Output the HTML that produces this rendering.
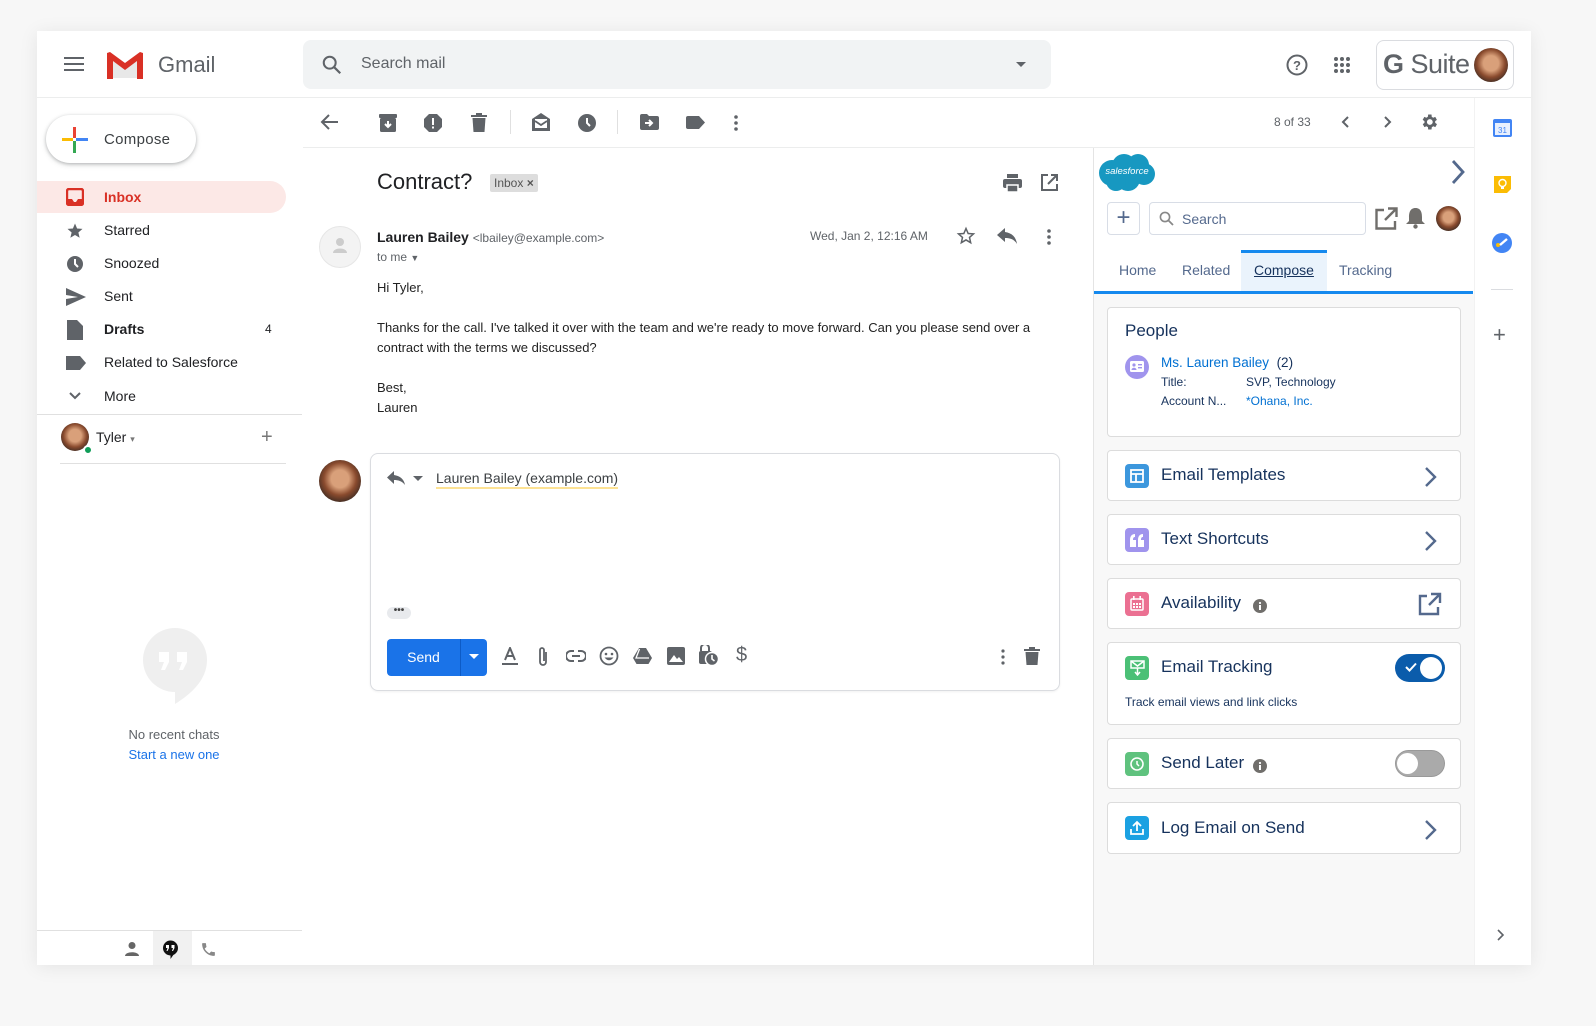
<!DOCTYPE html>
<html><head><meta charset="utf-8"><style>
*{box-sizing:border-box;margin:0;padding:0}
body{width:1596px;height:1026px;background:#f7f7f7;font-family:"Liberation Sans",Arial,sans-serif;position:relative;overflow:hidden;color:#202124}
.a{position:absolute}
#card{left:37px;top:31px;width:1494px;height:934px;background:#fff;box-shadow:0 2px 18px rgba(0,0,0,.08)}
.nav{font-size:14px;color:#202124}
.ic{fill:#5f6368}
.sfcard{position:absolute;left:1107px;width:354px;background:#fff;border:1px solid #dcdcdc;border-radius:4px}
.sft{position:absolute;left:53px;font-size:17px;color:#16325c}
.sfi{position:absolute;left:17px;width:24px;height:24px;border-radius:4px}
.chev{position:absolute;right:22px;top:15px}
</style></head><body>
<div id="card" class="a"></div>

<!-- header -->
<svg class="a" style="left:64px;top:56px" width="22" height="18"><rect y="1" width="20" height="2" fill="#5f6368"/><rect y="7" width="20" height="2" fill="#5f6368"/><rect y="13" width="20" height="2" fill="#5f6368"/></svg>
<svg class="a" style="left:105px;top:51px" width="40" height="29" viewBox="0 0 40 29"><path d="M2 4 L20 17 L38 4 V27 H2Z" fill="#e8e8e8"/><path d="M2 2 V28 H8 V10 L20 19 L32 10 V28 H38 V2 L35 1 L20 12 L5 1Z" fill="#d93025"/></svg>
<div class="a" style="left:158px;top:52px;font-size:22px;color:#5f6368">Gmail</div>
<div class="a" style="left:303px;top:40px;width:748px;height:49px;background:#f1f3f4;border-radius:8px"></div>
<svg class="a" style="left:321px;top:54px" width="22" height="22" viewBox="0 0 24 24"><circle cx="9.5" cy="9.5" r="6.5" fill="none" stroke="#5f6368" stroke-width="2.2"/><path d="M14.5 14.5 L21 21" stroke="#5f6368" stroke-width="2.4"/></svg>
<div class="a" style="left:361px;top:55px;font-size:16px;color:#5f6368">Search mail</div>
<svg class="a" style="left:1015px;top:61px" width="12" height="7"><path d="M1 1 L6 6 L11 1Z" fill="#5f6368"/></svg>
<svg class="a" style="left:1285px;top:53px" width="24" height="24" viewBox="0 0 24 24"><circle cx="12" cy="12" r="9.5" fill="none" stroke="#5f6368" stroke-width="2"/><text x="12" y="17" font-size="13" text-anchor="middle" fill="#5f6368" font-family="Liberation Sans" font-weight="bold">?</text></svg>
<svg class="a" style="left:1333px;top:56px" width="18" height="18"><g fill="#5f6368"><circle cx="3" cy="3" r="2"/><circle cx="9" cy="3" r="2"/><circle cx="15" cy="3" r="2"/><circle cx="3" cy="9" r="2"/><circle cx="9" cy="9" r="2"/><circle cx="15" cy="9" r="2"/><circle cx="3" cy="15" r="2"/><circle cx="9" cy="15" r="2"/><circle cx="15" cy="15" r="2"/></g></svg>
<div class="a" style="left:1376px;top:40px;width:138px;height:50px;border:1px solid #dadce0;border-radius:8px"></div>
<div class="a" style="left:1383px;top:49px;font-size:27px;color:#5f6368;letter-spacing:-.5px"><b>G</b> Suite</div>
<div class="a" style="left:1474px;top:48px;width:34px;height:34px;border-radius:50%;background:radial-gradient(circle at 50% 45%,#d9a07a 0 30%,#8a4b2e 55%,#3b2a22 80%)"></div>
<div class="a" style="left:37px;top:97px;width:1494px;height:1px;background:#eceded"></div>

<!-- left nav -->
<div class="a" style="left:46px;top:115px;width:150px;height:48px;border-radius:24px;background:#fff;box-shadow:0 1px 3px rgba(60,64,67,.3),0 2px 6px rgba(60,64,67,.15)"></div>
<svg class="a" style="left:62px;top:127px" width="26" height="26"><rect x="11" y="0" width="3" height="11" fill="#ea4335"/><rect x="14" y="11" width="12" height="3" fill="#4285f4"/><rect x="11" y="14" width="3" height="12" fill="#34a853"/><rect x="0" y="11" width="11" height="3" fill="#fbbc04"/></svg>
<div class="a" style="left:104px;top:131px;font-size:15px;color:#3c4043;letter-spacing:.3px">Compose</div>
<div class="a" style="left:37px;top:181px;width:249px;height:32px;background:#fce8e6;border-radius:0 16px 16px 0"></div>
<svg class="a" style="left:66px;top:188px" width="18" height="18"><rect x="1" y="1" width="16" height="16" rx="2" fill="none" stroke="#d93025" stroke-width="2.4"/><path d="M1 11 H6 L8 14 H10 L12 11 H17 V17 H1Z" fill="#d93025"/></svg>
<div class="a nav" style="left:104px;top:189px;color:#d93025;font-weight:bold">Inbox</div>
<svg class="a" style="left:66px;top:222px" width="18" height="18" viewBox="0 0 24 24"><path class="ic" d="M12 17.3 L18.2 21 L16.5 14 L22 9.2 L14.8 8.6 L12 2 L9.2 8.6 L2 9.2 L7.5 14 L5.8 21Z"/></svg>
<div class="a nav" style="left:104px;top:222px">Starred</div>
<svg class="a" style="left:66px;top:255px" width="18" height="18"><circle cx="9" cy="9" r="8" fill="#5f6368"/><path d="M9 4 V9 L12 12" stroke="#fff" stroke-width="2" fill="none"/></svg>
<div class="a nav" style="left:104px;top:255px">Snoozed</div>
<svg class="a" style="left:66px;top:288px" width="20" height="18"><path d="M0 0 L20 9 L0 18 V11 L12 9 L0 7Z" fill="#5f6368"/></svg>
<div class="a nav" style="left:104px;top:288px">Sent</div>
<svg class="a" style="left:67px;top:320px" width="16" height="20"><path d="M0 0 H10 L16 6 V20 H0Z" fill="#5f6368"/></svg>
<div class="a nav" style="left:104px;top:321px;font-weight:bold">Drafts</div>
<div class="a" style="left:265px;top:322px;font-size:12px;color:#202124">4</div>
<svg class="a" style="left:66px;top:356px" width="20" height="14"><path d="M0 0 H14 L20 7 L14 14 H0Z" fill="#5f6368"/></svg>
<div class="a nav" style="left:104px;top:354px">Related to Salesforce</div>
<svg class="a" style="left:69px;top:392px" width="12" height="8"><path d="M1 1 L6 6 L11 1" stroke="#5f6368" stroke-width="2" fill="none"/></svg>
<div class="a nav" style="left:104px;top:388px">More</div>
<div class="a" style="left:37px;top:414px;width:265px;height:1px;background:#e0e0e0"></div>
<div class="a" style="left:61px;top:423px;width:28px;height:28px;border-radius:50%;background:radial-gradient(circle at 50% 45%,#d9a07a 0 30%,#8a4b2e 55%,#3b2a22 80%)"></div>
<div class="a" style="left:83px;top:445px;width:10px;height:10px;border-radius:50%;background:#0f9d58;border:2px solid #fff"></div>
<div class="a" style="left:96px;top:429px;font-size:14px;color:#202124">Tyler <span style="font-size:9px;color:#777">▾</span></div>
<div class="a" style="left:261px;top:426px;font-size:20px;color:#777">+</div>
<div class="a" style="left:60px;top:463px;width:226px;height:1px;background:#e0e0e0"></div>
<svg class="a" style="left:143px;top:628px" width="64" height="78" viewBox="0 0 64 78"><path d="M32 0 A32 32 0 0 1 64 32 C64 52 48 66 32 76 V64 A32 32 0 0 1 32 0Z" fill="#efefef"/><path d="M16 24 h10 v10 l-4 8 h-4 l3 -8 h-5Z M34 24 h10 v10 l-4 8 h-4 l3 -8 h-5Z" fill="#fff"/></svg>
<div class="a" style="left:37px;top:727px;width:274px;text-align:center;font-size:13px;color:#5f6368">No recent chats</div>
<div class="a" style="left:37px;top:747px;width:274px;text-align:center;font-size:13px;color:#1a73e8">Start a new one</div>
<div class="a" style="left:37px;top:930px;width:265px;height:1px;background:#e0e0e0"></div>
<div class="a" style="left:153px;top:931px;width:39px;height:34px;background:#f1f1f1"></div>
<svg class="a" style="left:124px;top:941px" width="16" height="16"><circle cx="8" cy="4.5" r="3.5" fill="#666"/><path d="M1 15 C1 10 15 10 15 15Z" fill="#666"/></svg>
<svg class="a" style="left:162px;top:940px" width="17" height="19"><circle cx="8.5" cy="8" r="7.5" fill="#111"/><path d="M8.5 15 V19 L12 14Z" fill="#111"/><path d="M4 5 h3 v3 l-1.5 3 h-1l1-3h-1.5Z M9.5 5 h3 v3 l-1.5 3 h-1l1-3h-1.5Z" fill="#fff"/></svg>
<svg class="a" style="left:200px;top:941px" width="17" height="17" viewBox="0 0 24 24"><path d="M6.6 10.8 c1.4 2.8 3.8 5.1 6.6 6.6 l2.2-2.2 c.3-.3.7-.4 1-.2 1.1.4 2.3.6 3.6.6.6 0 1 .4 1 1V20c0 .6-.4 1-1 1C10.6 21 3 13.4 3 4c0-.6.4-1 1-1h3.5c.6 0 1 .4 1 1 0 1.3.2 2.5.6 3.6.1.3 0 .7-.2 1Z" fill="#888"/></svg>

<!-- toolbar -->
<svg class="a" style="left:320px;top:113px" width="20" height="18" viewBox="0 0 20 18"><path d="M18 9 H3 M9 2 L2 9 L9 16" stroke="#5f6368" stroke-width="2" fill="none"/></svg>
<svg class="a" style="left:379px;top:114px" width="18" height="18"><rect x="0" y="0" width="18" height="4" rx="1" fill="#5f6368"/><rect x="1" y="4" width="16" height="14" rx="1.5" fill="#5f6368"/><path d="M9 7 V13 M6 10 L9 13 L12 10" stroke="#fff" stroke-width="2" fill="none"/></svg>
<svg class="a" style="left:424px;top:114px" width="18" height="18"><path d="M5 0 H13 L18 5 V13 L13 18 H5 L0 13 V5Z" fill="#5f6368"/><rect x="8" y="4" width="2" height="7" fill="#fff"/><rect x="8" y="12.5" width="2" height="2" fill="#fff"/></svg>
<svg class="a" style="left:471px;top:113px" width="16" height="19"><rect x="0" y="2" width="16" height="2" fill="#5f6368"/><rect x="5" y="0" width="6" height="2" fill="#5f6368"/><path d="M1.5 5 H14.5 L13.5 19 H2.5Z" fill="#5f6368"/></svg>
<div class="a" style="left:510px;top:110px;width:1px;height:24px;background:#e0e0e0"></div>
<svg class="a" style="left:531px;top:112px" width="20" height="20"><path d="M1 7 L10 1 L19 7 V19 H1Z" fill="#5f6368"/><rect x="4" y="7" width="12" height="9" fill="#fff"/><path d="M4 9 L10 13 L16 9" stroke="#5f6368" stroke-width="1.8" fill="none"/></svg>
<svg class="a" style="left:578px;top:114px" width="18" height="18"><circle cx="9" cy="9" r="9" fill="#5f6368"/><path d="M9 4 V9 L12 12" stroke="#fff" stroke-width="2" fill="none"/></svg>
<div class="a" style="left:617px;top:110px;width:1px;height:24px;background:#e0e0e0"></div>
<svg class="a" style="left:640px;top:114px" width="19" height="16"><path d="M0 2 Q0 0 2 0 H7 L9 2 H17 Q19 2 19 4 V14 Q19 16 17 16 H2 Q0 16 0 14Z" fill="#5f6368"/><path d="M5 9 H11 M9 6 L12 9 L9 12" stroke="#fff" stroke-width="2" fill="none"/></svg>
<svg class="a" style="left:686px;top:116px" width="19" height="13"><path d="M2 0 H13 L19 6.5 L13 13 H2 Q0 13 0 11 V2 Q0 0 2 0Z" fill="#5f6368"/></svg>
<svg class="a" style="left:733px;top:114px" width="6" height="18"><circle cx="3" cy="3" r="1.8" fill="#5f6368"/><circle cx="3" cy="9" r="1.8" fill="#5f6368"/><circle cx="3" cy="15" r="1.8" fill="#5f6368"/></svg>
<div class="a" style="left:1274px;top:115px;font-size:12px;color:#5f6368">8 of 33</div>
<svg class="a" style="left:1341px;top:116px" width="10" height="12"><path d="M7 1 L2 6 L7 11" stroke="#5f6368" stroke-width="2" fill="none"/></svg>
<svg class="a" style="left:1382px;top:116px" width="10" height="12"><path d="M3 1 L8 6 L3 11" stroke="#5f6368" stroke-width="2" fill="none"/></svg>
<svg class="a" style="left:1419px;top:112px" width="20" height="20" viewBox="0 0 24 24"><path d="M19.4 13a7.5 7.5 0 0 0 0-2l2.1-1.6-2-3.5-2.5 1a7.6 7.6 0 0 0-1.7-1L15 3h-4l-.4 2.9a7.6 7.6 0 0 0-1.7 1l-2.5-1-2 3.5L6.6 11a7.5 7.5 0 0 0 0 2l-2.1 1.6 2 3.5 2.5-1c.5.4 1.1.7 1.7 1L11 21h4l.4-2.9c.6-.3 1.2-.6 1.7-1l2.5 1 2-3.5ZM13 15.5a3.5 3.5 0 1 1 0-7 3.5 3.5 0 0 1 0 7Z" fill="#5f6368"/></svg>
<div class="a" style="left:303px;top:147px;width:1172px;height:1px;background:#eceded"></div>

<!-- email -->
<div class="a" style="left:377px;top:169px;font-size:22px;color:#202124">Contract?</div>
<div class="a" style="left:490px;top:174px;height:18px;padding:0 4px;background:#ddd;border-radius:2px;font-size:12px;line-height:18px;color:#555">Inbox <b>×</b></div>
<svg class="a" style="left:1003px;top:174px" width="19" height="18"><rect x="4" y="0" width="11" height="4" fill="#5f6368"/><rect x="0" y="5" width="19" height="9" rx="2" fill="#5f6368"/><rect x="4" y="11" width="11" height="7" fill="#5f6368" stroke="#fff" stroke-width="1.5"/></svg>
<svg class="a" style="left:1041px;top:174px" width="17" height="17"><path d="M7 1 H1 V16 H16 V10" stroke="#5f6368" stroke-width="2" fill="none"/><path d="M10 1 H16 V7 M16 1 L7 10" stroke="#5f6368" stroke-width="2" fill="none"/></svg>
<div class="a" style="left:319px;top:226px;width:42px;height:42px;border-radius:50%;background:#f3f3f3;border:1px solid #e6e6e6"></div>
<svg class="a" style="left:330px;top:236px" width="20" height="20"><circle cx="10" cy="6" r="4" fill="#ccc"/><path d="M3 17 C3 11 17 11 17 17Z" fill="#ccc"/></svg>
<div class="a" style="left:377px;top:229px;font-size:14px;color:#202124"><b>Lauren Bailey</b> <span style="font-size:12px;color:#5f6368">&lt;lbailey@example.com&gt;</span></div>
<div class="a" style="left:377px;top:250px;font-size:12px;color:#5f6368">to me <span style="font-size:9px">▼</span></div>
<div class="a" style="left:810px;top:229px;font-size:12px;color:#5f6368">Wed, Jan 2, 12:16 AM</div>
<svg class="a" style="left:956px;top:226px" width="20" height="20" viewBox="0 0 24 24"><path d="M12 3 L14.6 9 L21 9.5 L16.2 13.7 L17.6 20 L12 16.7 L6.4 20 L7.8 13.7 L3 9.5 L9.4 9Z" fill="none" stroke="#5f6368" stroke-width="1.8"/></svg>
<svg class="a" style="left:997px;top:228px" width="20" height="16"><path d="M8 0 L0 7 L8 14 V10 C13 10 17 11 20 16 C19 9 15 5 8 4Z" fill="#5f6368"/></svg>
<svg class="a" style="left:1046px;top:228px" width="6" height="18"><circle cx="3" cy="3" r="1.8" fill="#5f6368"/><circle cx="3" cy="9" r="1.8" fill="#5f6368"/><circle cx="3" cy="15" r="1.8" fill="#5f6368"/></svg>
<div class="a" style="left:377px;top:278px;font-size:13px;color:#222;line-height:20px;width:690px">Hi Tyler,<br><br>Thanks for the call. I've talked it over with the team and we're ready to move forward. Can you please send over a contract with the terms we discussed?<br><br>Best,<br>Lauren</div>

<!-- reply -->
<div class="a" style="left:319px;top:460px;width:42px;height:42px;border-radius:50%;background:radial-gradient(circle at 50% 45%,#d9a07a 0 28%,#8a4b2e 52%,#3b2a22 78%)"></div>
<div class="a" style="left:370px;top:453px;width:690px;height:238px;border:1px solid #dadce0;border-radius:8px;box-shadow:0 1px 2px rgba(0,0,0,.06)"></div>
<svg class="a" style="left:387px;top:471px" width="18" height="15"><path d="M7 0 L0 6.5 L7 13 V9 C11 9 15 10 18 14 C17 8 13 5 7 4Z" fill="#5f6368"/></svg>
<svg class="a" style="left:413px;top:476px" width="10" height="6"><path d="M0 0 H10 L5 5Z" fill="#5f6368"/></svg>
<div class="a" style="left:436px;top:469px;font-size:14px;color:#3c4043;border-bottom:2px solid #fde293;line-height:18px">Lauren Bailey (example.com)</div>
<div class="a" style="left:387px;top:607px;width:24px;height:12px;border-radius:6px;background:#e8eaed;font-size:10px;line-height:8px;text-align:center;color:#444;font-weight:bold">•••</div>
<div class="a" style="left:387px;top:639px;width:100px;height:37px;background:#1a73e8;border-radius:4px"></div>
<div class="a" style="left:460px;top:639px;width:1px;height:37px;background:#0d5bc6"></div>
<div class="a" style="left:387px;top:649px;width:73px;text-align:center;color:#fff;font-size:14px">Send</div>
<svg class="a" style="left:469px;top:654px" width="10" height="6"><path d="M0 0 H10 L5 5Z" fill="#fff"/></svg>
<svg class="a" style="left:501px;top:647px" width="18" height="20"><path d="M4 13 L9 1 L14 13 M6 9 H12" stroke="#5f6368" stroke-width="2" fill="none"/><rect x="1" y="16" width="16" height="2" fill="#5f6368"/></svg>
<svg class="a" style="left:537px;top:646px" width="12" height="22"><path d="M9 6 V16 A3 3 0 0 1 3 16 V4 A2 2 0 0 1 7 4 V15" stroke="#5f6368" stroke-width="1.8" fill="none"/></svg>
<svg class="a" style="left:566px;top:650px" width="20" height="12"><path d="M8 1 H5 A5 5 0 0 0 5 11 H8 M12 1 H15 A5 5 0 0 1 15 11 H12 M6 6 H14" stroke="#5f6368" stroke-width="2" fill="none"/></svg>
<svg class="a" style="left:599px;top:646px" width="20" height="20"><circle cx="10" cy="10" r="8.5" fill="none" stroke="#5f6368" stroke-width="1.8"/><circle cx="7" cy="8" r="1.3" fill="#5f6368"/><circle cx="13" cy="8" r="1.3" fill="#5f6368"/><path d="M5.5 11.5 Q10 17 14.5 11.5Z" fill="#5f6368"/></svg>
<svg class="a" style="left:633px;top:648px" width="19" height="16"><path d="M6 0 H13 L19 10 L15.5 16 H3.5 L0 10Z" fill="#5f6368"/><path d="M6.5 1 L3 10 H16" stroke="#fff" stroke-width="1.3" fill="none"/></svg>
<svg class="a" style="left:667px;top:647px" width="18" height="18"><rect width="18" height="18" rx="2" fill="#5f6368"/><path d="M2 15 L7 8 L10 12 L12 10 L16 15Z" fill="#fff"/></svg>
<svg class="a" style="left:698px;top:645px" width="22" height="22"><path d="M3 6 V3 A4 4 0 0 1 11 3 V6" stroke="#5f6368" stroke-width="2" fill="none"/><rect x="1" y="6" width="13" height="13" rx="2" fill="#5f6368"/><circle cx="14" cy="14" r="6.5" fill="#5f6368" stroke="#fff" stroke-width="1.5"/><path d="M14 10 V14 L16.5 16" stroke="#fff" stroke-width="1.6" fill="none"/></svg>
<div class="a" style="left:736px;top:644px;font-size:20px;color:#5f6368">$</div>
<svg class="a" style="left:1000px;top:648px" width="6" height="18"><circle cx="3" cy="3" r="1.6" fill="#5f6368"/><circle cx="3" cy="9" r="1.6" fill="#5f6368"/><circle cx="3" cy="15" r="1.6" fill="#5f6368"/></svg>
<svg class="a" style="left:1024px;top:647px" width="16" height="18"><rect x="0" y="2" width="16" height="2" fill="#5f6368"/><rect x="5" y="0" width="6" height="2" fill="#5f6368"/><path d="M1.5 5 H14.5 L13.5 18 H2.5Z" fill="#5f6368"/></svg>

<!-- salesforce panel -->
<div class="a" style="left:1093px;top:148px;width:1px;height:817px;background:#e4e4e4"></div>
<div class="a" style="left:1094px;top:294px;width:380px;height:671px;background:#f8f8f8"></div>
<svg class="a" style="left:1098px;top:152px" width="58" height="40" viewBox="0 0 58 40"><g fill="#1798c1"><circle cx="14" cy="21" r="13"/><circle cx="26" cy="14" r="12"/><circle cx="40" cy="13" r="11"/><circle cx="46" cy="22" r="11"/><circle cx="30" cy="27" r="12"/><circle cx="18" cy="29" r="10"/></g><text x="29" y="22" font-size="9.5" fill="#fff" text-anchor="middle" font-family="Liberation Sans" font-style="italic">salesforce</text></svg>
<svg class="a" style="left:1450px;top:159px" width="16" height="26"><path d="M3 2 L13 13 L3 24" stroke="#54698d" stroke-width="2.8" fill="none"/></svg>
<div class="a" style="left:1107px;top:202px;width:33px;height:33px;border:1px solid #d8dde6;border-radius:4px;font-size:24px;line-height:29px;text-align:center;color:#54698d">+</div>
<div class="a" style="left:1149px;top:202px;width:217px;height:33px;border:1px solid #d8dde6;border-radius:4px"></div>
<svg class="a" style="left:1159px;top:211px" width="15" height="15"><circle cx="6" cy="6" r="4.6" fill="none" stroke="#888" stroke-width="1.6"/><path d="M9.5 9.5 L14 14" stroke="#888" stroke-width="1.8"/></svg>
<div class="a" style="left:1182px;top:211px;font-size:14px;color:#54698d">Search</div>
<svg class="a" style="left:1375px;top:207px" width="23" height="23"><path d="M9 3 H1.5 V21.5 H20 V14" stroke="#706e6b" stroke-width="2.4" fill="none"/><path d="M13 1.5 H21.5 V10 M21.5 1.5 L10 13" stroke="#706e6b" stroke-width="2.4" fill="none"/></svg>
<svg class="a" style="left:1405px;top:207px" width="21" height="22"><path d="M10.5 1 C5 1 4 6 4 10 V14 L1 17 H20 L17 14 V10 C17 6 16 1 10.5 1Z" fill="#706e6b"/><circle cx="10.5" cy="19.5" r="2.2" fill="#706e6b"/></svg>
<div class="a" style="left:1436px;top:206px;width:25px;height:25px;border-radius:50%;background:radial-gradient(circle at 50% 45%,#d9a07a 0 28%,#8a4b2e 52%,#3b2a22 78%)"></div>
<div class="a" style="left:1119px;top:262px;font-size:14px;color:#54698d">Home</div>
<div class="a" style="left:1182px;top:262px;font-size:14px;color:#54698d">Related</div>
<div class="a" style="left:1241px;top:250px;width:86px;height:43px;background:#eaf3fc;border-top:3px solid #1589ee"></div>
<div class="a" style="left:1254px;top:262px;font-size:14px;color:#16325c;text-decoration:underline">Compose</div>
<div class="a" style="left:1339px;top:262px;font-size:14px;color:#54698d">Tracking</div>
<div class="a" style="left:1094px;top:291px;width:379px;height:3px;background:#1589ee"></div>

<div class="sfcard" style="top:307px;height:130px">
<div class="a" style="left:17px;top:13px;font-size:17px;color:#16325c">People</div>
<div class="a" style="left:17px;top:47px;width:24px;height:24px;border-radius:50%;background:#a094ed"></div>
<svg class="a" style="left:22px;top:53px" width="14" height="11"><rect width="14" height="11" rx="1.5" fill="#fff"/><circle cx="4" cy="4" r="1.6" fill="#a094ed"/><path d="M1.5 9 C1.5 6 6.5 6 6.5 9Z" fill="#a094ed"/><rect x="8" y="3" width="4" height="1.4" fill="#a094ed"/><rect x="8" y="6" width="4" height="1.4" fill="#a094ed"/></svg>
<div class="a" style="left:53px;top:47px;font-size:13.5px;color:#0070d2">Ms. Lauren Bailey &nbsp;<span style="color:#16325c">(2)</span></div>
<div class="a" style="left:53px;top:67px;font-size:12px;color:#16325c">Title:</div>
<div class="a" style="left:138px;top:67px;font-size:12px;color:#16325c">SVP, Technology</div>
<div class="a" style="left:53px;top:86px;font-size:12px;color:#16325c">Account N...</div>
<div class="a" style="left:138px;top:86px;font-size:12px;color:#0070d2">*Ohana, Inc.</div>
</div>

<div class="sfcard" style="top:450px;height:51px">
<div class="sfi" style="top:13px;background:#3c97dd"></div>
<svg class="a" style="left:22px;top:18px" width="14" height="14"><rect x="1" y="1" width="12" height="12" fill="none" stroke="#fff" stroke-width="1.8"/><path d="M1 5 H13 M6 5 V13" stroke="#fff" stroke-width="1.8"/></svg>
<div class="sft" style="top:14px">Email Templates</div>
<svg class="chev" width="14" height="22"><path d="M2 2 L11 11 L2 20" stroke="#54698d" stroke-width="2.4" fill="none"/></svg>
</div>

<div class="sfcard" style="top:514px;height:51px">
<div class="sfi" style="top:13px;background:#a094ed"></div>
<svg class="a" style="left:21px;top:18px" width="16" height="14"><path d="M1 14 V7 C1 3 3 1 6 1 V4 C4.5 4 4 5 4 7 H7 V14Z M9 14 V7 C9 3 11 1 14 1 V4 C12.5 4 12 5 12 7 H15 V14Z" fill="#fff"/></svg>
<div class="sft" style="top:14px">Text Shortcuts</div>
<svg class="chev" width="14" height="22"><path d="M2 2 L11 11 L2 20" stroke="#54698d" stroke-width="2.4" fill="none"/></svg>
</div>

<div class="sfcard" style="top:578px;height:51px">
<div class="sfi" style="top:13px;background:#eb7092"></div>
<svg class="a" style="left:22px;top:17px" width="14" height="15"><rect x="1" y="3" width="12" height="11" rx="1" fill="none" stroke="#fff" stroke-width="1.5"/><rect x="3" y="0" width="1.6" height="4" fill="#fff"/><rect x="9.4" y="0" width="1.6" height="4" fill="#fff"/><g fill="#fff"><rect x="3" y="7" width="2" height="2"/><rect x="6" y="7" width="2" height="2"/><rect x="9" y="7" width="2" height="2"/><rect x="3" y="10" width="2" height="2"/><rect x="6" y="10" width="2" height="2"/><rect x="9" y="10" width="2" height="2"/></g></svg>
<div class="sft" style="top:14px">Availability</div>
<svg class="a" style="left:145px;top:20px" width="14" height="14"><circle cx="7" cy="7" r="7" fill="#706e6b"/><rect x="6" y="6" width="2" height="5" fill="#fff"/><circle cx="7" cy="4" r="1.1" fill="#fff"/></svg>
<svg class="a" style="right:18px;top:13px" width="24" height="24"><path d="M9 4 H2 V22 H20 V15" stroke="#54698d" stroke-width="2.4" fill="none"/><path d="M13 2 H22 V11 M22 2 L11 13" stroke="#54698d" stroke-width="2.4" fill="none"/></svg>
</div>

<div class="sfcard" style="top:642px;height:83px">
<div class="sfi" style="top:13px;background:#4bc076"></div>
<svg class="a" style="left:22px;top:17px" width="15" height="16"><path d="M1 1 H14 V8 H1Z" fill="none" stroke="#fff" stroke-width="1.5"/><path d="M1 1 L7.5 6 L14 1" stroke="#fff" stroke-width="1.5" fill="none"/><path d="M7.5 8 V15 M5 12 L7.5 15 L10 12" stroke="#fff" stroke-width="1.5" fill="none"/></svg>
<div class="sft" style="top:14px">Email Tracking</div>
<div class="a" style="left:287px;top:11px;width:50px;height:28px;border-radius:14px;background:#0b5cab"></div>
<div class="a" style="left:312px;top:14px;width:22px;height:22px;border-radius:50%;background:#fff"></div>
<svg class="a" style="left:297px;top:19px" width="12" height="10"><path d="M1 5 L4.5 8.5 L11 1.5" stroke="#fff" stroke-width="2" fill="none"/></svg>
<div class="a" style="left:17px;top:52px;font-size:12px;color:#16325c">Track email views and link clicks</div>
</div>

<div class="sfcard" style="top:738px;height:51px">
<div class="sfi" style="top:13px;background:#5fc27e"></div>
<svg class="a" style="left:21px;top:17px" width="16" height="16"><circle cx="8" cy="8" r="6" fill="none" stroke="#fff" stroke-width="1.6"/><path d="M8 5 V8 L10 10" stroke="#fff" stroke-width="1.5" fill="none"/></svg>
<div class="sft" style="top:14px">Send Later</div>
<svg class="a" style="left:145px;top:20px" width="14" height="14"><circle cx="7" cy="7" r="7" fill="#706e6b"/><rect x="6" y="6" width="2" height="5" fill="#fff"/><circle cx="7" cy="4" r="1.1" fill="#fff"/></svg>
<div class="a" style="left:287px;top:11px;width:50px;height:27px;border-radius:14px;background:#aaa;border:1px solid #999"></div>
<div class="a" style="left:289px;top:14px;width:21px;height:21px;border-radius:50%;background:#fff"></div>
</div>

<div class="sfcard" style="top:802px;height:52px">
<div class="sfi" style="top:13px;background:#1ba1e2"></div>
<svg class="a" style="left:22px;top:17px" width="14" height="15"><path d="M7 11 V2 M3 6 L7 2 L11 6" stroke="#fff" stroke-width="1.8" fill="none"/><path d="M1 9 V14 H13 V9" stroke="#fff" stroke-width="1.8" fill="none"/></svg>
<div class="sft" style="top:15px">Log Email on Send</div>
<svg class="chev" width="14" height="22" style="top:16px"><path d="M2 2 L11 11 L2 20" stroke="#54698d" stroke-width="2.4" fill="none"/></svg>
</div>

<!-- right rail -->
<div class="a" style="left:1474px;top:98px;width:1px;height:867px;background:#f2f2f2"></div>
<svg class="a" style="left:1493px;top:118px" width="19" height="19"><rect y="1" width="19" height="18" rx="2" fill="#4285f4"/><rect x="2" y="5" width="15" height="12" fill="#e8f0fe"/><text x="9.5" y="15" font-size="8" fill="#4285f4" text-anchor="middle" font-family="Liberation Sans">31</text></svg>
<svg class="a" style="left:1494px;top:176px" width="17" height="17"><path d="M0 0 H17 V13 L13 17 H0Z" fill="#fbbc04"/><circle cx="8.5" cy="7" r="3.5" fill="none" stroke="#fff" stroke-width="1.4"/><rect x="7" y="11" width="3" height="2" fill="#fff"/></svg>
<svg class="a" style="left:1492px;top:233px" width="20" height="20"><circle cx="10" cy="10" r="10" fill="#4285f4"/><circle cx="6" cy="12" r="2" fill="#fbbc04"/><path d="M8 12 L15 6" stroke="#fff" stroke-width="2.4"/></svg>
<div class="a" style="left:1491px;top:289px;width:22px;height:1px;background:#dadce0"></div>
<div class="a" style="left:1493px;top:322px;font-size:22px;color:#5f6368">+</div>
<svg class="a" style="left:1497px;top:929px" width="8" height="12"><path d="M1 1 L6 6 L1 11" stroke="#5f6368" stroke-width="1.6" fill="none"/></svg>
</body></html>
